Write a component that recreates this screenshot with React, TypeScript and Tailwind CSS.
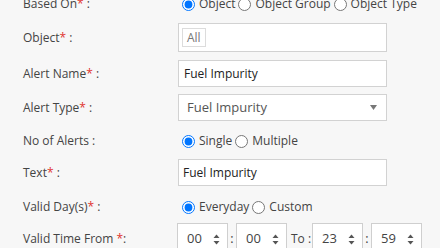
import React from "react";

const font = { fontFamily: '"Open Sans", "Noto Sans", sans-serif' };

function Req() {
  return <span className="text-[#e0332f]">*</span>;
}

function Label({ children }: { children: React.ReactNode }) {
  return (
    <div className="w-[178px] shrink-0 whitespace-nowrap pl-[23px] text-[12px] text-[#444]">
      {children}
    </div>
  );
}

function Radio({ label, checked, name }: { label: string; checked?: boolean; name: string }) {
  return (
    <label className="flex items-center gap-[4px] whitespace-nowrap text-[12px] text-[#444]">
      <input type="radio" name={name} defaultChecked={checked} className="m-0 h-[13px] w-[13px]" />
      <span>{label}</span>
    </label>
  );
}

function Spinner() {
  return (
    <svg width="7" height="11" viewBox="0 0 7 11">
      <path d="M3.5 0.5 L6.5 4 L0.5 4 Z" fill="#555" />
      <path d="M3.5 10.5 L6.5 7 L0.5 7 Z" fill="#555" />
    </svg>
  );
}

function TimeBox({ v }: { v: string }) {
  return (
    <div className="flex h-[32px] w-[51px] shrink-0 items-center justify-between border border-[#cfcfcf] bg-white pl-[9px] pr-[7px] text-[13px] text-[#444]">
      <span>{v}</span>
      <Spinner />
    </div>
  );
}

export default function App() {
  return (
    <div className="h-[248px] w-[440px] overflow-hidden bg-[#f7f7f7]" style={font}>
      <div className="-mt-[6px] flex flex-col">
        <div className="flex h-[20px] items-center">
          <Label>
            Based On<Req /> :
          </Label>
          <div className="flex items-center gap-[3px] pl-[4px]">
            <Radio name="b" label="Object" checked />
            <Radio name="b" label="Object Group" />
            <Radio name="b" label="Object Type" />
          </div>
        </div>

        <div className="mt-[9px] flex h-[29px] items-center">
          <Label>
            Object<Req /> :
          </Label>
          <div className="flex h-[29px] w-[209px] items-center border border-[#d2d2d2] bg-white pl-[3px]">
            <div className="flex h-[19px] items-center border border-[#dcdcdc] px-[4px] text-[12px] text-[#777]">
              All
            </div>
          </div>
        </div>

        <div className="mt-[8px] flex h-[27px] items-center">
          <Label>
            Alert Name<Req /> :
          </Label>
          <div className="flex h-[27px] w-[209px] items-center border border-[#d2d2d2] bg-white pl-[5px] text-[12px] text-[#222]">
            Fuel Impurity
          </div>
        </div>

        <div className="mt-[7px] flex h-[27px] items-center">
          <Label>
            Alert Type<Req /> :
          </Label>
          <div className="flex h-[27px] w-[209px] items-center justify-between border border-[#d2d2d2] bg-white pl-[8px] pr-[9px] text-[13px] text-[#555]">
            <span>Fuel Impurity</span>
            <svg width="7" height="5" viewBox="0 0 7 5">
              <path d="M0 0 L7 0 L3.5 5 Z" fill="#777" />
            </svg>
          </div>
        </div>

        <div className="mt-[10px] flex h-[20px] items-center">
          <Label>No of Alerts :</Label>
          <div className="flex items-center gap-[3px] pl-[4px]">
            <Radio name="n" label="Single" checked />
            <Radio name="n" label="Multiple" />
          </div>
        </div>

        <div className="mt-[8px] flex h-[27px] items-center">
          <Label>
            Text<Req /> :
          </Label>
          <div className="flex h-[27px] w-[209px] items-center border border-[#d2d2d2] bg-white pl-[4px] text-[12px] text-[#222]">
            Fuel Impurity
          </div>
        </div>

        <div className="mt-[11px] flex h-[20px] items-center">
          <Label>
            Valid Day(s)<Req /> :
          </Label>
          <div className="flex items-center gap-[3px] pl-[4px]">
            <Radio name="d" label="Everyday" checked />
            <Radio name="d" label="Custom" />
          </div>
        </div>

        <div className="mt-[6px] flex h-[32px] items-center">
          <Label>
            Valid Time From <Req />:
          </Label>
          <div className="-ml-[1px] flex items-center text-[12.5px] text-[#444]">
            <TimeBox v="00" />
            <span className="w-[8px] text-center">:</span>
            <TimeBox v="00" />
            <span className="w-[25px] whitespace-nowrap pl-[4px] text-[12px]">To :</span>
            <TimeBox v="23" />
            <span className="w-[8px] text-center">:</span>
            <TimeBox v="59" />
          </div>
        </div>
      </div>
    </div>
  );
}
